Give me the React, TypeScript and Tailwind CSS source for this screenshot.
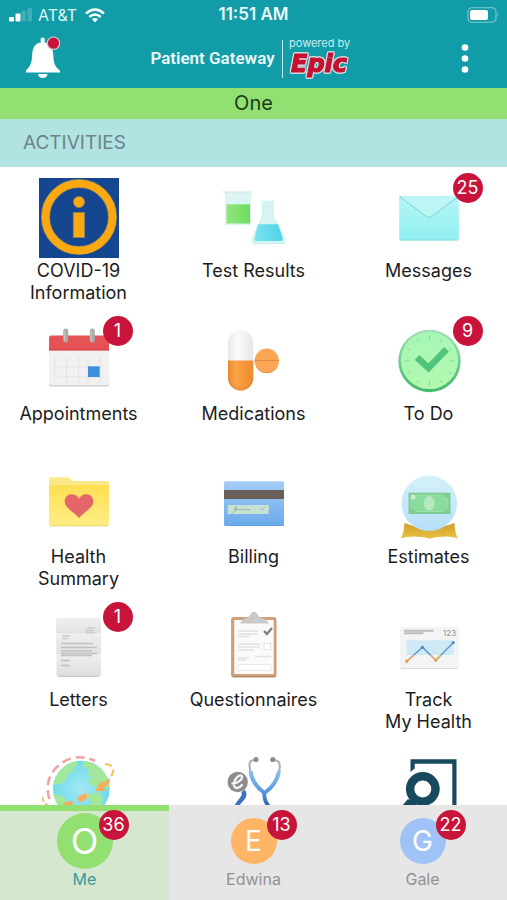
import type { ReactNode } from "react";

function CovidIcon() {
  return (
    <>
      <rect width="80" height="80" fill="#14478f" />
      <circle cx="40" cy="39" r="33.5" fill="none" stroke="#8d8468" strokeWidth="9" />
      <circle cx="40" cy="39" r="33.5" fill="none" stroke="#fca810" strokeWidth="7.6" />
      <circle cx="40" cy="24" r="5.6" fill="#fca810" stroke="#8d8468" strokeWidth=".6" />
      <rect x="34.3" y="34.5" width="11.2" height="25" fill="#fca810" stroke="#8d8468" strokeWidth=".8" />
    </>
  );
}

function TestIcon() {
  return (
    <>
      <defs>
        <linearGradient id="beaker"><stop stopColor="#93e67f" /><stop offset="1" stopColor="#6edb5d" /></linearGradient>
        <linearGradient id="flask"><stop stopColor="#7be2ee" /><stop offset="1" stopColor="#4fd3ea" /></linearGradient>
      </defs>
      <path d="M8.5 13.7H38.5L37 16.5V47H11V16.5Z" fill="#dcf4f4" />
      <path d="M8.5 14H38.5" stroke="#cdeaea" strokeWidth="1" />
      <path d="M12.500 26.3H36V45.5H12.500Z" fill="url(#beaker)" />
      <path d="M45.7 22.7H61.7L59.3 25V38.5L71 60Q72.5 65.7 69 65.7H40Q36.500 65.7 38 60L48.300 38.500V25Z" fill="#d6f5f2" />
      <path d="M48.500 25V38.500L38.300 60M59.200 25V38.500L70.500 60M39 65.500H70" stroke="#c2eeee" strokeWidth=".8" fill="none" />
      <path d="M44 46.300H64L68.500 60Q69 63 67 63H42Q40 63 40.700 60Z" fill="url(#flask)" />
    </>
  );
}

function MailIcon() {
  return (
    <>
      <defs>
        <linearGradient id="mail" x2="0" y2="1"><stop stopColor="#b7f5f5" /><stop offset="1" stopColor="#91f0f1" /></linearGradient>
      </defs>
      <rect x="10.200" y="17.700" width="59.600" height="44.600" rx="1.500" fill="url(#mail)" />
      <path d="M10.500 18H69.500L42.500 38.600Q40 40.300 37.500 38.600Z" fill="#bdf5f4" />
      <path d="M10.500 18.500L37.500 38.600Q40 40.300 42.500 38.600L69.500 18.500" fill="none" stroke="#7dd3d6" strokeWidth="1" />
      <path d="M11 62H69" stroke="#82dcdf" strokeWidth="1" />
    </>
  );
}

function CalendarIcon() {
  return (
    <>
      <rect x="10" y="15" width="60" height="50.500" rx="2" fill="#d0d0d0" />
      <rect x="10" y="15" width="60" height="49" rx="2" fill="#f1f1f1" />
      <path d="M10 29.500V17Q10 14.500 12.500 14.500H67.500Q70 14.500 70 17V29.500Z" fill="#e55354" />
      <path d="M10 28.500H70" stroke="#d84345" strokeWidth="1.500" />
      <path d="M16 46H64M16 56H64M16 35V56M27.500 35V62M39.500 35V62M49 35V62M61 35V62" stroke="#e3e3e3" strokeWidth="1" />
      <path d="M26.700 10V19M53.300 10V19" stroke="#a9aaa8" strokeWidth="5" strokeLinecap="round" />
      <path d="M25.500 10V19M52.100 10V19" stroke="#c2c3c1" strokeWidth="1.500" strokeLinecap="round" />
      <rect x="49" y="45.300" width="11.700" height="10.700" fill="#3c90dd" />
    </>
  );
}

function PillsIcon() {
  return (
    <>
      <defs>
        <linearGradient id="pill"><stop stopColor="#e98a31" /><stop offset=".3" stopColor="#fca346" /><stop offset="1" stopColor="#ee8b30" /></linearGradient>
        <linearGradient id="pillTop"><stop stopColor="#e8e8e8" /><stop offset=".35" stopColor="#fafafa" /><stop offset="1" stopColor="#e6e6e6" /></linearGradient>
      </defs>
      <path d="M14 40V22A12.650 12.650 0 0 1 39.300 22V40Z" fill="url(#pillTop)" />
      <path d="M14 39.500V57A12.650 12.650 0 0 0 39.300 57V39.500Z" fill="url(#pill)" />
      <path d="M14.500 57A12.200 12.200 0 0 0 38.800 57" fill="none" stroke="#c9833f" strokeWidth=".8" />
      <circle cx="52.800" cy="39.800" r="12.200" fill="#fba654" />
      <path d="M40.700 39.500H65" stroke="#d88a48" strokeWidth="1" />
      <path d="M42.500 46A12 12 0 0 0 63 46" stroke="#ea9548" strokeWidth="1" fill="none" />
    </>
  );
}

function TodoIcon() {
  return (
    <>
      <defs>
        <linearGradient id="rim" x2="0" y2="1"><stop stopColor="#a3dfb5" /><stop offset="1" stopColor="#42ba6c" /></linearGradient>
        <linearGradient id="face" x2="0" y2="1"><stop stopColor="#a6f7b5" /><stop offset="1" stopColor="#b3f8b0" /></linearGradient>
      </defs>
      <circle cx="40.500" cy="40" r="31.200" fill="url(#rim)" />
      <circle cx="40.500" cy="39.500" r="28.600" fill="url(#face)" />
      <path d="M40.500 14V19M40.500 60V65M15 40H20M61 40H66M28 18L29.500 21M53 18L51.500 21M28 62L29.500 59M53 62L51.500 59M18.500 27.500L21 29M62.500 27.500L60 29M18.500 52.500L21 51M62.500 52.500L60 51" stroke="#83d694" strokeWidth="1" />
      <path d="M28 36.500L39.500 47L57.500 28.300" fill="none" stroke="#50c37c" strokeWidth="6.500" />
    </>
  );
}

function FolderIcon() {
  return (
    <>
      <defs>
        <linearGradient id="folder" x2="0" y2="1"><stop stopColor="#ffdf52" /><stop offset="1" stopColor="#ffed86" /></linearGradient>
      </defs>
      <path d="M10 61V15Q10 13.300 12 13.300H28Q30 13.300 31.500 15L34 17H68Q70 17 70 19V61Z" fill="#fbe888" />
      <path d="M10 23Q10 21 12 21H68Q70 21 70 23V60Q70 62 68 62H12Q10 62 10 60Z" fill="url(#folder)" />
      <path d="M11 61.800H69" stroke="#e3ca59" strokeWidth=".8" />
      <path d="M40 54C36 48.500 25.700 44.500 25.700 37.500C25.700 29 36.500 28 40 34.500C43.500 28 54.300 29 54.300 37.500C54.300 44.500 44 48.500 40 54Z" fill="#e46669" />
    </>
  );
}

function CardIcon() {
  return (
    <>
      <defs>
        <linearGradient id="card" x2="0" y2="1"><stop stopColor="#a5cdf7" /><stop offset="1" stopColor="#69aaea" /></linearGradient>
      </defs>
      <rect x="10" y="17.300" width="60" height="44.700" rx="1.500" fill="url(#card)" />
      <rect x="10" y="26" width="60" height="9" fill="#6b5f5a" />
      <rect x="13.700" y="41" width="41" height="9" fill="#c6e2d2" />
      <path d="M18 49.500Q24 43 22 42.500Q20 45 21 47Q24 44 26 46Q28 44 30 46Q33 44 36 46M46 46Q48 46 51 43" fill="none" stroke="#91aa9b" strokeWidth=".8" />
      <path d="M11 61.500H69" stroke="#609cd7" strokeWidth=".8" />
    </>
  );
}

function EstimateIcon() {
  return (
    <>
      <defs>
        <linearGradient id="ball" x2="0" y2="1"><stop stopColor="#d5f1f9" /><stop offset="1" stopColor="#b7dffa" /></linearGradient>
        <linearGradient id="stand" x2="0" y2="1"><stop stopColor="#cf9f29" /><stop offset="1" stopColor="#e8c444" /></linearGradient>
      </defs>
      <path d="M15.500 59Q40 69 65.500 59Q66 70 69 74.500Q61 71.500 49 73Q43 73.500 40.500 75Q38 73.500 32 73Q20 71.500 11.800 74.500Q15 69 15.500 59Z" fill="url(#stand)" />
      <circle cx="40.300" cy="39.300" r="27.700" fill="url(#ball)" />
      <rect x="19.500" y="28.700" width="42" height="21.300" fill="#7ecb96" />
      <path d="M27 31H54Q55 34.500 59 35V43.500Q55 44 54 47.500H27Q26 44 22 43.500V35Q26 34.500 27 31Z" fill="#89dc9d" stroke="#a0e7ac" strokeWidth=".8" />
      <ellipse cx="40.300" cy="39.300" rx="5.500" ry="7.200" fill="#b4e9bd" />
      <circle cx="24" cy="33" r="2.500" fill="#c7efce" />
    </>
  );
}

function LetterIcon() {
  return (
    <>
      <defs>
        <linearGradient id="letter" x2="0" y2="1"><stop stopColor="#f0f0f0" /><stop offset=".25" stopColor="#e2e2e2" /><stop offset=".27" stopColor="#efefef" /><stop offset=".6" stopColor="#e2e2e2" /><stop offset=".63" stopColor="#efefef" /><stop offset="1" stopColor="#dddddd" /></linearGradient>
      </defs>
      <path d="M17 12.500Q17 11 18.500 11H60.500Q62 11 62 12.500V67Q62 69.700 59 69.700H20Q17.500 69.700 17.500 67Z" fill="url(#letter)" />
      <path d="M19 69.300H60" stroke="#c6c6c6" strokeWidth="1" />
      <path d="M48 21H56M46 23.500H54M47 25.500H56M23 29H31M23 31.500H29" stroke="#cccccc" strokeWidth="1.500" />
      <path d="M22 36.500H54M22 40.500H58M22 44H53M22 46.500H58M22 48.500H53" stroke="#c0c0c0" strokeWidth="1.600" />
      <path d="M22 53.500H31M22 58.500H31" stroke="#c0c0c0" strokeWidth="1.300" />
    </>
  );
}

function ClipboardIcon() {
  return (
    <>
      <rect x="17.300" y="10.500" width="45" height="60" rx="2.500" fill="#b58b65" />
      <rect x="17.300" y="10" width="45" height="59" rx="2.500" fill="#cda27a" />
      <rect x="20.300" y="13" width="39.400" height="54" fill="#fafafa" />
      <path d="M26 16.500Q28 11.500 34 10.500L38 5.500Q40 4 42 5.500L46 10.500Q52 11.500 55 16.500Z" fill="#c9cac8" />
      <path d="M24 24H44M24 27H44M24 29.500H36M24 37H46M24 40H46M24 43H40M24 51H35M24 53H32M41 49.500H57" stroke="#e2e2e2" strokeWidth="1.300" />
      <rect x="50" y="36.500" width="6.500" height="6.500" fill="#fff" stroke="#e0e0e0" />
      <path d="M24 57.500H57V63.500H24Z" fill="#fff" stroke="#e3e3e3" strokeWidth=".8" />
      <path d="M50 24L52.800 27L58 21" fill="none" stroke="#7d7f84" strokeWidth="2.200" />
    </>
  );
}

function TrackIcon() {
  return (
    <>
      <rect x="11" y="20.300" width="59" height="41.400" rx="1.500" fill="#f3f4f5" />
      <path d="M12 61.500H69" stroke="#dcdcdc" strokeWidth="1" />
      <path d="M15 23.800H44.500M15 26.300H34.500" stroke="#bcbcbc" strokeWidth="2" />
      <text x="54" y="28.800" fontSize="8" fill="#8f8f8f" fontFamily="Inter, sans-serif">123</text>
      <rect x="17.500" y="33.300" width="47" height="14.700" fill="#cdeaf6" />
      <path d="M17.800 54.300L33.500 40.300L46.800 53.300L64.200 35.700" fill="none" stroke="#5f91c7" strokeWidth="1.400" />
      <path d="M17.800 54.300L25 48M41.500 48L46.800 53.300L52 48" fill="none" stroke="#e9b065" strokeWidth="1.500" />
      <circle cx="17.800" cy="54.300" r="1.700" fill="#e5a052" />
      <circle cx="46.800" cy="53.300" r="1.700" fill="#e5a052" />
      <circle cx="33.500" cy="40.300" r="1.600" fill="#5586c2" />
      <circle cx="64.200" cy="35.700" r="1.600" fill="#5586c2" />
    </>
  );
}

function GlobeIcon() {
  return (
    <>
      <defs>
        <radialGradient id="globe"><stop stopColor="#a3e8f4" /><stop offset="1" stopColor="#71dbea" /></radialGradient>
        <clipPath id="globeClip"><circle cx="42.300" cy="39" r="28.300" /></clipPath>
      </defs>
      <circle cx="42.300" cy="39" r="28.300" fill="url(#globe)" />
      <g clipPath="url(#globeClip)" fill="#a3e89a">
        <path d="M18 22Q28 12 36 10L39 14L34 18L36 21L29 24L26 31L20 34L13 35Z" />
        <path d="M45 10L58 12L70 27L72 39L65 37L60 42L57 36L51 35L49 30L54 27L48 25L51 20L44 17Z" />
        <path d="M50 44L59 42L64 49L60 60L50 60L53 52L48 48Z" />
        <path d="M14 44L24 46L29 53L26 62L15 53Z" />
      </g>
      <path d="M10.500 49Q5 32 16 19Q27 7 40 7.300Q49 7.500 56 11" fill="none" stroke="#eda5a5" strokeWidth="2.600" strokeDasharray="9 5" />
      <path d="M66 14Q76 15 74 22Q72 30 62 38" fill="none" stroke="#f7c163" strokeWidth="2.200" strokeDasharray="7 4" />
      <path d="M3.500 47Q4 54 10 56" fill="none" stroke="#f5c27d" strokeWidth="2" strokeDasharray="5 2" />
      <path d="M71 28L64 33L62 31L56 41L67 41L65 38L70 34Z" fill="#f5ad60" />
      <path d="M48 43L42 45L38 48L40 52L45 51L48 47ZM34 51L26 52L23 57H33Z" fill="#f5ad60" />
    </>
  );
}

function StethoscopeIcon() {
  return (
    <>
      <defs>
        <linearGradient id="tube" x1="0" y1="20" x2="0" y2="55" gradientUnits="userSpaceOnUse"><stop stopColor="#8cc0f3" /><stop offset=".6" stopColor="#5a99e0" /><stop offset="1" stopColor="#2e67b3" /></linearGradient>
      </defs>
      <path d="M29 41Q32 45 27 50Q24 53 22 58" fill="none" stroke="#3a73bd" strokeWidth="4.500" />
      <path d="M41 10Q35 9.500 35.500 16Q35.700 21 38 25M59 10Q65.500 9.500 65.800 16Q66 20 64 24" fill="none" stroke="#aaacad" strokeWidth="2" />
      <circle cx="42" cy="9.500" r="2.600" fill="#8d8e90" />
      <circle cx="58.800" cy="9.500" r="2.600" fill="#8d8e90" />
      <path d="M36.500 21Q38 34 50.500 43Q63 34 65 21M50.500 41Q49 49 55 57" fill="none" stroke="url(#tube)" strokeWidth="4" strokeLinejoin="round" />
      <circle cx="23.700" cy="32" r="10.200" fill="#8c8c8c" />
      <path d="M18.500 33.500C24 33.500 30 28.500 27.500 25.800C25 24 19.500 30 20 35C20.500 39.500 25.500 38.500 28 35" fill="none" stroke="#f5f5f5" strokeWidth="2.300" strokeLinecap="round" />
    </>
  );
}

function SearchDoorIcon() {
  return (
    <>
      <path d="M21.500 22V9.300H67.500V60H63.300V13.700H25.700V18.500Z" fill="#17495f" />
      <circle cx="33.800" cy="39" r="12.700" fill="none" stroke="#17495f" strokeWidth="8.400" />
      <path d="M19 49L12 57H27V54L34 55Z" fill="#17495f" />
    </>
  );
}

type Activity = { name: string; lines: string[]; icon: ReactNode; count?: number };

const activities: Activity[] = [
  { name: "COVID-19 Information", lines: ["COVID-19", "Information"], icon: <CovidIcon /> },
  { name: "Test Results", lines: ["Test Results"], icon: <TestIcon /> },
  { name: "Messages", lines: ["Messages"], icon: <MailIcon />, count: 25 },
  { name: "Appointments", lines: ["Appointments"], icon: <CalendarIcon />, count: 1 },
  { name: "Medications", lines: ["Medications"], icon: <PillsIcon /> },
  { name: "To Do", lines: ["To Do"], icon: <TodoIcon />, count: 9 },
  { name: "Health Summary", lines: ["Health", "Summary"], icon: <FolderIcon /> },
  { name: "Billing", lines: ["Billing"], icon: <CardIcon /> },
  { name: "Estimates", lines: ["Estimates"], icon: <EstimateIcon /> },
  { name: "Letters", lines: ["Letters"], icon: <LetterIcon />, count: 1 },
  { name: "Questionnaires", lines: ["Questionnaires"], icon: <ClipboardIcon /> },
  { name: "Track My Health", lines: ["Track", "My Health"], icon: <TrackIcon /> },
  { name: "Share records", lines: [], icon: <GlobeIcon /> },
  { name: "E-visit", lines: [], icon: <StethoscopeIcon /> },
  { name: "Find care", lines: [], icon: <SearchDoorIcon /> },
];

function Badge({ count, place }: { count: number; place: string }) {
  return (
    <span className={`absolute flex size-[30px] items-center justify-center rounded-full bg-[#c8143a] text-lg text-white ${place}`}>
      {count}
    </span>
  );
}

function ActivityTile({ item }: { item: Activity }) {
  return (
    <button type="button" aria-label={item.name} className="flex h-[143px] flex-col items-center">
      <span className="relative mb-0.5 block size-20">
        <svg viewBox="0 0 80 80" className="size-20" aria-hidden="true">{item.icon}</svg>
        {item.count !== undefined && <Badge count={item.count} place="-top-[5px] left-16" />}
      </span>
      {item.lines.map((line) => (
        <span key={line} className="whitespace-nowrap text-lg leading-[22px] text-[#1c1c1e]">{line}</span>
      ))}
    </button>
  );
}

function StatusBar() {
  return (
    <div className="grid h-[30px] grid-cols-3 items-center px-2 text-base text-white">
      <div className="flex items-center gap-1">
        <svg viewBox="0 0 26 16" className="h-4 w-[26px]" aria-hidden="true" fill="#fff">
          <rect x="1" y="10" width="5" height="4.500" rx="1" />
          <rect x="7.500" y="6.500" width="5" height="8" rx="1" />
          <rect x="13.500" y="3.500" width="4.500" height="11" rx="1" opacity=".2" />
          <rect x="19.500" y="1" width="4.500" height="13.500" rx="1" opacity=".2" />
        </svg>
        <span className="text-[#dff4f5]">AT&amp;T</span>
        <svg viewBox="0 0 20 15" className="ml-1 h-[15px] w-5" aria-hidden="true" fill="none" stroke="#fff" strokeWidth="2.600">
          <path d="M1 5.500Q10-2.500 19 5.500" />
          <path d="M4.300 9Q10 4 15.700 9" />
          <path d="M7 11.300Q10 8.800 13 11.300L10 14.400Z" fill="#fff" stroke="none" />
        </svg>
      </div>
      <span className="text-center text-[17px] font-semibold text-[#eafafa]">11:51 AM</span>
      <svg viewBox="0 0 32 16" className="h-4 w-8 justify-self-end" aria-label="Battery">
        <rect x="1" y=".8" width="28" height="14.400" rx="4" fill="none" stroke="#7fcbd0" strokeWidth="1.100" />
        <rect x="3" y="3" width="18" height="10" rx="2" fill="#fff" />
        <path d="M30.500 5.500Q32 8 30.500 10.500Z" fill="#7fcbd0" />
      </svg>
    </div>
  );
}

function Toolbar() {
  return (
    <div className="grid h-[58px] grid-cols-[1fr_auto_1fr] items-center px-6">
      <button type="button" aria-label="Notifications" className="justify-self-start">
        <svg viewBox="0 0 38 46" className="h-[46px] w-[38px]">
          <path d="M16.700 2.500Q18.700 .5 20.700 2.500V7H16.700Z" fill="#fff" />
          <path d="M18.700 6.500C9 6.500 8.500 14 8 21C7.600 28 5.500 31 2 34.500V36.500H36V34.500C31.500 31 29.800 28 29.400 21C29 14 28.400 6.500 18.700 6.500Z" fill="#fff" />
          <path d="M14 38H23.500Q23 42 18.700 42Q14.500 42 14 38Z" fill="#fff" />
          <circle cx="29.500" cy="7.200" r="6.200" fill="#c8143a" stroke="#d4c9d2" strokeWidth="1.200" />
        </svg>
      </button>
      <div className="flex items-center">
        <h1 className="font-[Roboto] text-[17px] font-semibold text-[#eafafa]">Patient Gateway</h1>
        <span className="ml-[7px] h-[38px] w-px bg-[#c8eaec]" />
        <svg viewBox="0 0 70 50" className="ml-1 h-[50px] w-[70px]" role="img" aria-label="powered by Epic">
          <text x="2" y="13" fontSize="11" fill="#c9eef0" fontFamily="Inter, sans-serif">powered by</text>
          <text x="4" y="38" className="[filter:drop-shadow(1px_0_0_#d9dde2)_drop-shadow(-1px_0_0_#d9dde2)_drop-shadow(0_1px_0_#d9dde2)_drop-shadow(0_-1px_0_#d9dde2)]" fontFamily="DejaVu Sans, sans-serif" fontSize="24" fontWeight="700" fontStyle="italic" fill="#c41230" stroke="#c41230" strokeWidth="1.200">Epic</text>
        </svg>
      </div>
      <button type="button" aria-label="Menu" className="justify-self-end">
        <svg viewBox="0 0 36 32" className="h-8 w-9" fill="#fff">
          <circle cx="18" cy="4.500" r="3.300" />
          <circle cx="18" cy="15.500" r="3.300" />
          <circle cx="18" cy="26.500" r="3.300" />
        </svg>
      </button>
    </div>
  );
}

function ProfileTab({ letter, name, count, color }: { letter: string; name: string; count: number; color: string }) {
  return (
    <button type="button" className="flex flex-col items-center bg-[#e6e6e6] pt-[13px] text-base leading-5 text-[#929292]">
      <span className={`relative flex size-[46px] items-center justify-center rounded-full text-[28px] text-white ${color}`}>
        {letter}
        <Badge count={count} place="-top-2 left-9" />
      </span>
      <span className="mt-[5px]">{name}</span>
    </button>
  );
}

export default function App() {
  return (
    <div className="flex h-screen flex-col bg-white font-[Inter,sans-serif]">
      <header className="bg-[#129ca7]">
        <StatusBar />
        <Toolbar />
      </header>
      <p className="h-[31px] bg-[#92e071] text-center text-xl leading-[31px] text-[#1d3b18]">One</p>
      <h2 className="h-12 bg-[#b0e3e2] px-[23px] text-[19px] leading-[48px] text-[#6d8387]">ACTIVITIES</h2>
      <main className="min-h-0 flex-1 overflow-hidden">
        <div className="grid grid-cols-3 gap-x-[18px] pt-[11px]">
          {activities.map((item) => <ActivityTile key={item.name} item={item} />)}
        </div>
      </main>
      <nav aria-label="Profiles" className="grid h-[95px] grid-cols-3">
        <button type="button" aria-current="page" className="flex flex-col items-center border-t-[6px] border-[#92e071] bg-[#d5e7ce] pt-[2px] text-base leading-5 text-[#369a9e]">
          <span className="relative flex size-14 items-center justify-center rounded-full bg-[#92e071] text-4xl text-white">
            O
            <Badge count={36} place="-top-[3px] left-[42px]" />
          </span>
          <span>Me</span>
        </button>
        <ProfileTab letter="E" name="Edwina" count={13} color="bg-[#ffb566]" />
        <ProfileTab letter="G" name="Gale" count={22} color="bg-[#9fc3f6]" />
      </nav>
    </div>
  );
}
